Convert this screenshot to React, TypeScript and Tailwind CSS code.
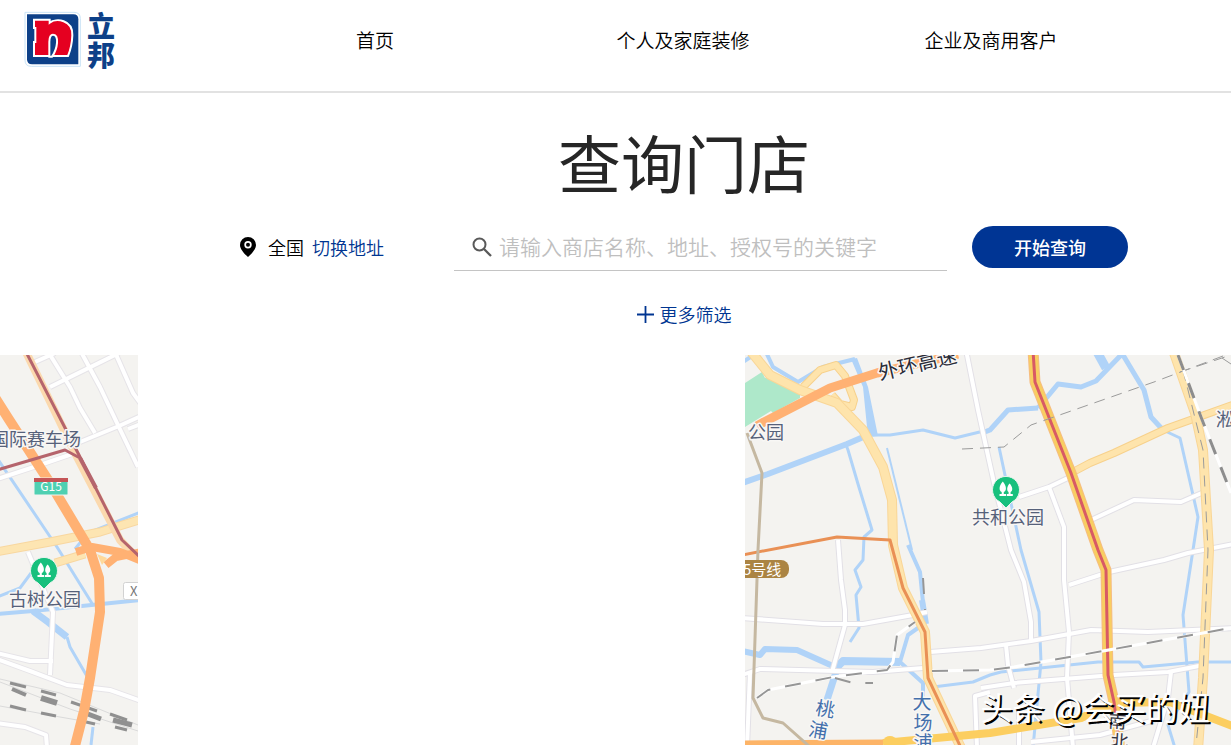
import React from "react";

type Line = { d: string; w?: number };

const WATER = "#b0d3f8";
const FONT = "font-['Noto_Sans_CJK_SC',sans-serif]";

function Lines({ items, color, w, dash }: { items: (string | Line)[]; color: string; w: number; dash?: string }) {
  return (
    <g fill="none" stroke={color} strokeLinejoin="round" strokeDasharray={dash}>
      {items.map((item, i) => {
        const line = typeof item === "string" ? { d: item } : item;
        return <polyline key={i} points={line.d} strokeWidth={line.w ?? w} />;
      })}
    </g>
  );
}

function Roads({ items, color, edge, w }: { items: string[]; color: string; edge: string; w: number }) {
  return (
    <>
      <Lines items={items} color={edge} w={w + 2} />
      <Lines items={items} color={color} w={w} />
    </>
  );
}

function ParkPin({ x, y }: { x: number; y: number }) {
  return (
    <g transform={`translate(${x} ${y})`}>
      <path d="M0 18 L-6 12 A13.5 13.5 0 1 1 6 12 Z" fill="#18c07d" stroke="#e9f4ee" strokeWidth="1" />
      <g fill="#fff">
        <path d="M-3.2 -8.5 C-7.5 -4 -7 1 -4.3 2 L-4.3 4 L-6.5 4 L-6.5 6 L0 6 L0 4 L-2.2 4 L-2.2 2 C.8 1 .8 -4 -3.2 -8.5Z" />
        <path d="M3.6 -6.5 C.4 -3 .8 1 2.6 2 L2.6 4 L.8 4 L.8 6 L6.8 6 L6.8 4 L4.6 4 L4.6 2 C7 1 7 -3 3.6 -6.5Z" />
      </g>
    </g>
  );
}

function Label({ x, y, children, fill = "#56617a", size = 18, anchor = "start", rotate = 0 }: {
  x: number; y: number; children: string; fill?: string; size?: number;
  anchor?: "start" | "middle" | "end"; rotate?: number;
}) {
  return (
    <text x={x} y={y} fontSize={size} fill={fill} stroke="#f8f7f5" strokeWidth="3" paintOrder="stroke"
      strokeLinejoin="round" textAnchor={anchor} transform={`rotate(${rotate} ${x} ${y})`}>
      {children}
    </text>
  );
}

function WestMap() {
  return (
    <svg viewBox="0 355 138 390" preserveAspectRatio="xMidYMid slice" className="h-full w-[138px] shrink-0 bg-[#f4f3f0]" role="img" aria-label="古树公园">
      <Lines color={WATER} w={3} items={[
        "-3,458 57,547 93,605", { d: "-3,614 33,611 141,600", w: 4 }, { d: "33,611 48,622 67,637", w: 7 },
        "67,637 70,647 88,678", "75,549 88,533 141,512", "-3,597 20,588 37,565", "93,727 91,745",
      ]} />
      <Roads color="#fff" edge="#e6e4e8" w={4} items={[
        "47,350 70,387 80,408 95,433", "80,350 100,387 117,423 138,467", "114,350 133,393 141,404",
        "50,387 119,353", "35,362 55,353", "80,442 119,426 141,416", "128,429 141,424", "-3,479 40,465 78,452",
        "28,552 53,612 50,675", "-3,653 30,661 53,661", "-3,659 30,671 67,685 110,690 141,701", "-3,723 25,727 46,735 47,748",
      ]} />
      <Roads color="#fde5b2" edge="#f8d7a0" w={7} items={["-4,552 50,542 100,532 142,519", "55,563 85,554"]} />
      <Lines color="#fbd9ae" w={8} items={["25,350 77,457 120,540 134,555"]} />
      <g fill="none" stroke="#dadada" strokeWidth="1">
        <path d="M0 679 L60 693 L138 725 M0 682 L70 709 L138 731 M0 706 L60 717 L100 724" />
      </g>
      <Lines color="#909090" w={3} items={[
        "10,683 26,687", { d: "12,689 26,695", w: 4 }, "41,691 56,695", { d: "41,698 57,703", w: 6 },
        "10,706 26,710", "41,713 56,716", "71,702 97,711", { d: "80,711 101,719", w: 5 }, "110,714 127,720",
        { d: "113,720 132,725", w: 5 }, "115,727 127,730", "86,722 95,724",
      ]} />
      <Lines color="#ffb173" w={10} items={["-6,396 8,418 50,483 90,550 99,578 100,612 90,678 84,711 74,750"]} />
      <Lines color="#ffb173" w={8} items={["76,552 92,547 120,552 142,561", "106,565 116,557 142,552"]} />
      <path d="M97 554 L107 558 L102 565Z" fill="#ffd99a" />
      <Lines color="#b5646c" w={3} items={["25,350 80,457 122,540 141,558", "-3,470 65,450 80,458", { d: "80,458 96,488", w: 4 }]} />
      <rect x="34" y="478" width="34" height="17" rx="1" fill="#4fd0b2" stroke="#f3f3f0" />
      <rect x="34" y="478" width="34" height="4" fill="#c45557" />
      <text x="51" y="491" fontSize="12" fill="#fff" textAnchor="middle">G15</text>
      <rect x="123.500" y="582.500" width="24" height="17" rx="2" fill="#fff" stroke="#d2d2d2" />
      <text x="130" y="596" fontSize="13" fill="#777">X</text>
      <Label x={81} y={446} anchor="end">国际赛车场</Label>
      <ParkPin x={44} y={571} />
      <Label x={9} y={606}>古树公园</Label>
    </svg>
  );
}

function EastMap() {
  const metro = "1033,350 1035,382 1071,473 1098,550 1106,570 1108,675 1114,702 1120,750";
  return (
    <svg viewBox="745 355 486 390" preserveAspectRatio="xMidYMid slice" className="h-full min-w-0 flex-1 bg-[#f4f3f0]" role="img" aria-label="共和公园">
      <path d="M745 383 L762 372 L765 378 L772 377 L800 392 L800 398 L773 413 L771 411 L745 427Z" fill="#aee8ca" />
      <path d="M851 359 L857 358 L868 387 L878 436 L868 437 L863 387Z" fill={WATER} />
      <Lines color={WATER} w={4} items={[
        "765,350 773,367 798,382 823,367 855,359", "743,362 755,354", { d: "742,483 768,474 847,444 868,435", w: 6 },
        { d: "868,435 890,435 923,430 955,438 992,429", w: 3 }, { d: "985,432 990,430 1008,410 1038,408", w: 5 },
        { d: "1038,408 1058,384 1081,387 1096,381 1123,353", w: 5 }, { d: "1096,350 1106,368", w: 9 },
        { d: "1120,350 1144,390 1151,417 1163,430", w: 5 }, { d: "1163,430 1180,438 1198,517 1193,550 1183,615 1189,692 1168,725 1175,748", w: 3 },
        { d: "846,445 848,450 858,484 872,530 864,537 863,560 855,570 861,587 856,595 859,628 850,642", w: 3 },
        { d: "887,448 912,550", w: 2 }, "908,545 920,572 925,623 908,635 900,662 923,683 923,700",
        { d: "922,600 926,624", w: 6 },
        { d: "742,651 760,655 765,649 797,650 835,667", w: 6 }, { d: "837,667 843,661 900,662", w: 8 }, { d: "838,666 827,700", w: 7 },
        { d: "933,687 973,682 990,675 1001,672 1098,662 1139,662 1143,667 1198,662 1234,662", w: 3 },
        { d: "999,447 1021,550 1039,612 1041,662 1033,748", w: 3 },
      ]} />
      <Roads color="#fff" edge="#e2e0e6" w={4} items={[
        "966,350 978,410 994,483 1011,550 1024,582 1031,622 1031,642", "1019,497 1049,487 1070,477",
        "1049,487 1064,527 1064,580 1069,632 1067,678 1073,748", "1091,520 1134,500 1181,502 1204,492",
        "1069,585 1109,572 1164,560 1188,553 1234,544", "930,652 981,648 1031,641 1091,630 1148,632 1234,628",
        "742,618 823,624 863,624 913,615 927,612", "838,540 841,580 845,610 845,625 832,672",
        "742,675 760,669 873,672 923,668", "981,688 1014,683 1114,675 1168,672 1204,665",
        "1006,645 1008,665 1014,688", "1171,672 1168,698 1153,748", "750,672 747,748",
        "990,692 975,696 977,748", "1019,710 1019,748", "1031,742 1100,735 1155,720",
      ]} />
      <Roads color="#fee4ac" edge="#f7d18c" w={6} items={[
        "803,387 820,370 836,365 845,376 854,400 852,407 840,404 832,395",
        "1073,472 1090,463 1114,453 1168,428 1235,404",
      ]} />
      <Roads color="#fee4ac" edge="#f9d697" w={8} items={[
        "749,349 770,375 800,390 837,403 863,430 883,467 892,500 893,545 903,588 925,632 928,678 962,750",
        "1173,350 1195,413 1203,450 1209,550 1203,678 1198,750",
      ]} />
      <Lines color="#ffb173" w={9} items={["757,426 764,422 830,388 877,373 958,354"]} />
      <Lines color="#fcce60" w={8} items={["883,743 990,733 1081,718 1114,703 1170,702 1235,727"]} />
      <Lines color="#fdb467" w={7} items={["742,744 883,743"]} />
      <ellipse cx="890" cy="740" rx="6" ry="4" fill="#fcce60" />
      <Roads color="#f8ce61" edge="#f6bd82" w={9} items={[metro]} />
      <Lines color="#d85a65" w={3} items={[metro]} />
      <Lines color="#e99055" w={3} items={["742,555 837,537 890,540 903,588 925,632 928,678 962,750"]} />
      <Lines color="#c5b8a1" w={3} items={["747,433 762,473 758,550 753,698 763,718 783,723 810,747"]} />
      <Lines color="#9b9b9b" w={1} dash="11 7" items={[
        "962,449 1004,447 1031,425 1154,382 1231,353", "1183,370 1203,450 1208,550 1203,678 1196,745", "1180,372 1231,355", "1222,358 1231,364",
      ]} />
      <Lines color="#fff" w={3} items={[
        "757,698 768,690 833,677 887,670 893,662 897,635 915,622", "932,671 990,670 1014,667 1231,628", "1178,355 1201,417 1231,493",
      ]} />
      <Lines color="#969696" w={2} dash="16 15" items={[
        "757,698 768,690 833,677 887,670 893,662 897,635 915,622", "835,678 853,683 873,683",
        "932,671 990,670 1014,667 1231,628", "923,578 925,610",
      ]} />
      <Lines color="#8d8d8d" w={3} dash="16 14" items={["1178,355 1201,417 1231,493"]} />
      <Label x={748} y={439}>公园</Label>
      <Label x={880} y={380} fill="#292b38" size={20} rotate={-13}>外环高速</Label>
      <rect x="733" y="560" width="56" height="18" rx="8" fill="#ab8443" />
      <text x="743" y="575" fontSize="15" fill="#fff">5号线</text>
      <ParkPin x={1006} y={490} />
      <Label x={972} y={524}>共和公园</Label>
      <Label x={1216} y={426}>淞沪</Label>
      <Label x={824} y={716} anchor="middle" fill="#4470ac" size={19} rotate={10}>桃</Label>
      <Label x={817} y={737} anchor="middle" fill="#4470ac" size={19} rotate={10}>浦</Label>
      <Label x={922} y={709} anchor="middle" fill="#4470ac" size={19}>大</Label>
      <Label x={923} y={730} anchor="middle" fill="#4470ac" size={19}>场</Label>
      <Label x={923} y={750} anchor="middle" fill="#4470ac" size={19}>浦</Label>
      <Label x={1117} y={728} anchor="middle" fill="#363642" rotate={4}>南</Label>
      <Label x={1119} y={748} anchor="middle" fill="#363642" rotate={4}>北</Label>
    </svg>
  );
}

function Logo() {
  return (
    <a href="#" aria-label="立邦" className="flex shrink-0 items-center gap-[5px] pl-6">
      <svg viewBox="72 35 174 174" className="h-[58px] w-[58px]" aria-hidden="true">
        <path d="M75 39 H222 Q241 39 241 58 V201 H94 Q75 201 75 182Z" fill="#fff" stroke="#c9e3f6" strokeWidth="3" />
        <path d="M81 45 H220 Q235 45 235 60 V195 H96 Q81 195 81 180Z" fill="#0d4088" />
        <path d="M102 61 H149 V70 C168 56 219 60 217 108 C216 136 210 156 204 170 H102 V128 H106 V86 H102Z" fill="#e50020" stroke="#fff" strokeWidth="6" />
        <path d="M148 172 V128 C148 113 153 105 160 106 C177 108 174 146 156 172Z" fill="#0d4088" stroke="#fff" strokeWidth="6" />
      </svg>
      <span className="flex w-7 flex-col text-[28px] leading-[29px] font-black text-[#0d4088]">
        <span>立</span><span>邦</span>
      </span>
    </a>
  );
}

export default function App() {
  return (
    <div className={`relative w-full overflow-hidden bg-white text-black ${FONT}`} lang="zh-CN">
      <header className="flex h-[93px] items-start border-b-2 border-[#e2e2e2] pt-[11px]">
        <Logo />
        <nav className="ml-[106px] mr-[86px] grid flex-1 grid-cols-3 pt-[14px] text-center text-[19px] leading-[30px] font-[350]">
          <a href="#">首页</a>
          <a href="#">个人及家庭装修</a>
          <a href="#">企业及商用客户</a>
        </nav>
      </header>

      <main>
        <section className="flex flex-col pr-[103px] pl-[240px]">
          <h1 className="pt-[22px] text-center text-[63px] leading-[92px] text-[#262626]">查询门店</h1>
          <form className="mt-[19px] flex items-start" onSubmit={(e) => e.preventDefault()}>
            <div className="flex h-[42px] w-[214px] shrink-0 items-center text-[18px] font-[350]">
              <svg viewBox="0 0 16 20" className="mr-3 h-5 w-4" aria-hidden="true">
                <path fillRule="evenodd" d="M8 0 A8 8 0 0 1 16 8 C16 12 12 16.500 8 20 C4 16.500 0 12 0 8 A8 8 0 0 1 8 0Z M8 4 A3.700 3.700 0 1 0 8 11.400 A3.700 3.700 0 1 0 8 4Z" />
                <circle cx="8" cy="7.700" r="2" />
              </svg>
              <span className="mr-2">全国</span>
              <a href="#" className="text-[#003591]">切换地址</a>
            </div>
            <div className="mr-[25px] flex h-[45px] min-w-0 flex-1 items-center border-b border-[#c4c4c4] pl-[18px]">
              <svg viewBox="0 0 20 20" className="mr-[7px] mb-0.5 h-5 w-5 shrink-0" fill="none" stroke="#595959" strokeWidth="2" aria-hidden="true">
                <circle cx="7.500" cy="7.500" r="6" /><path d="M12 12 L19 19" strokeWidth="2.300" />
              </svg>
              <input type="search" aria-label="搜索门店" placeholder="请输入商店名称、地址、授权号的关键字"
                className="mb-1 h-10 min-w-0 flex-1 bg-transparent text-[21px] font-[350] outline-none placeholder:text-[#bfbfbf]" />
            </div>
            <button type="submit" className="h-[42px] w-[156px] shrink-0 rounded-full bg-[#003594] text-[18px] font-medium text-white">开始查询</button>
          </form>
          <button type="button" className="mt-[28px] mb-[26px] flex h-[30px] items-center justify-center gap-[6px] self-center text-[18px] font-[350] text-[#003591]">
            <svg viewBox="0 0 17 17" className="h-[17px] w-[17px]" stroke="#003591" strokeWidth="1.800" aria-hidden="true">
              <path d="M8.500 0 V17 M0 8.500 H17" />
            </svg>
            更多筛选
          </button>
        </section>
        <section aria-label="门店地图" className="flex h-[390px]">
          <WestMap />
          <div className="w-[607px] shrink-0" />
          <EastMap />
        </section>
      </main>
      <p className="absolute right-[21px] bottom-[17px] text-[32px] leading-[44px] whitespace-nowrap text-white [text-shadow:2px_2px_0_#000]">头条 @会买的妞</p>
    </div>
  );
}
